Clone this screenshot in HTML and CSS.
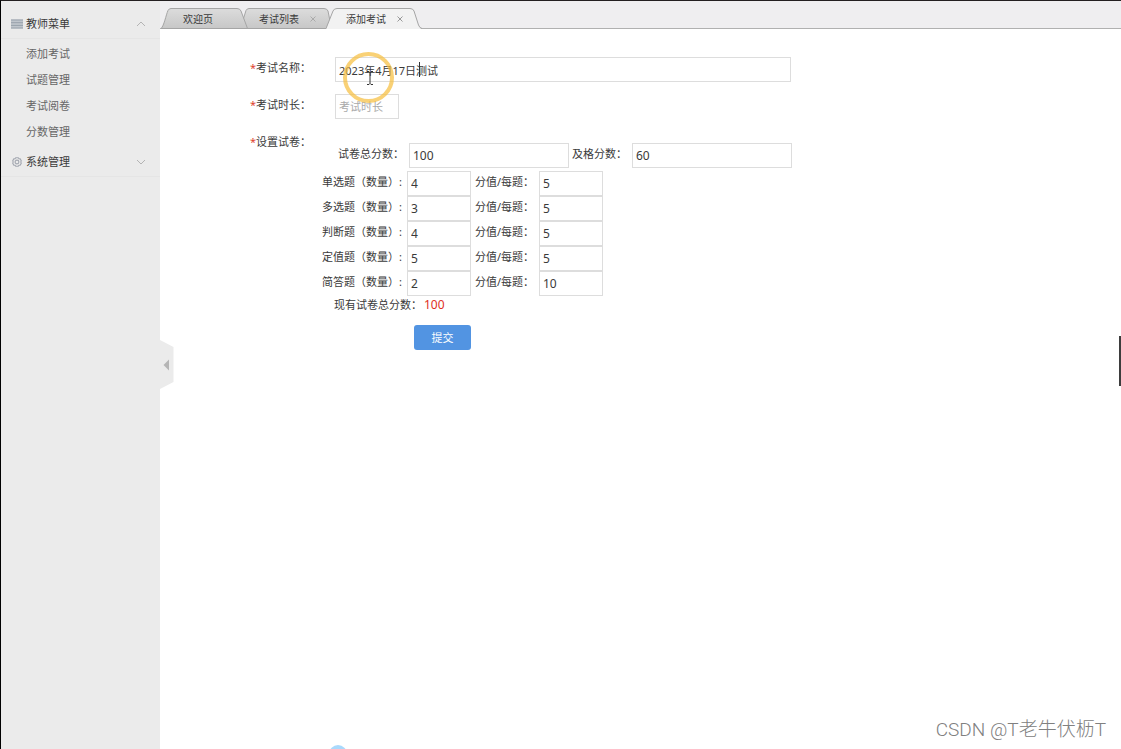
FILE: index.html
```html
<!DOCTYPE html>
<html lang="zh-CN">
<head>
<meta charset="utf-8">
<title>添加考试</title>
<link rel="stylesheet" href="styles.css">
</head>
<body>
<div class="app">
  <nav class="sidebar" aria-label="教师菜单">
    <button class="menu-head" type="button">
      <svg class="menu-icon" width="12" height="12" viewBox="0 0 12 12"><path d="M0 1.5h12v9H0z" fill="#bfc5cc"/><path d="M0 2h12M0 4.7h12M0 7.4h12M0 10h12" stroke="#98a1ab"/></svg>
      <span class="menu-title">教师菜单</span>
      <svg width="10" height="6" viewBox="0 0 10 6" fill="none" stroke="#b4b4b4"><path d="M1 5l4-4 4 4"/></svg>
    </button>
    <ul class="submenu">
      <li><a href="#add">添加考试</a></li>
      <li><a href="#questions">试题管理</a></li>
      <li><a href="#marking">考试阅卷</a></li>
      <li><a href="#scores">分数管理</a></li>
    </ul>
    <button class="menu-head menu-head-small" type="button">
      <svg class="menu-icon" width="12" height="12" viewBox="-1 -1 14 14" fill="none" stroke="#a4a8b1" stroke-width="1.300"><path d="M4.5 1h3l.7 1.2 1.5.1 1.3 2.4-.6 1.3.6 1.3-1.3 2.4-1.5.1L7.500 11h-3l-.7-1.200-1.500-.1L1 7.300 1.600 6 1 4.700l1.300-2.400 1.500-.1z"/><circle cx="6" cy="6" r="2.200"/></svg>
      <span class="menu-title">系统管理</span>
      <svg width="10" height="6" viewBox="0 0 10 6" fill="none" stroke="#b4b4b4"><path d="M1 1l4 4 4-4"/></svg>
    </button>
    <button class="collapse" type="button" aria-label="收起菜单">
      <svg width="14" height="50" viewBox="0 0 14 50"><path d="M0 0l13.500 7v35L0 49z" fill="#ebebeb"/><path d="M9 19.500v11L3.500 25z" fill="#b5b5b5"/></svg>
    </button>
  </nav>
  <div class="content">
    <div class="tabs">
      <div class="tab tab-first">
        <svg class="tab-shape" width="87" height="21" viewBox="0 0 87 21"><defs><linearGradient id="grey" x2="0" y2="1"><stop stop-color="#dcdcdc"/><stop offset="1" stop-color="#c7c7c7"/></linearGradient></defs><path d="M0 20.500C3 18 5 7 7 2.500Q8 .5 10 .5H76Q79 .5 80 3L86.500 20.500z" fill="url(#grey)" stroke="#a5a5a5"/></svg>
        <button class="tab-name" type="button">欢迎页</button>
      </div>
      <div class="tab tab-second">
        <svg class="tab-shape" width="89" height="21" viewBox="0 0 89 21"><path d="M0 20.500V12L3 2.500Q4 .5 6 .5H81Q84 .5 85 3L88.500 20.500z" fill="url(#grey)" stroke="#a5a5a5"/></svg>
        <button class="tab-name" type="button">考试列表</button>
        <button class="tab-close" type="button" aria-label="关闭考试列表"><svg width="6" height="6" viewBox="0 0 6 6" stroke="#aaa"><path d="M.5.5l5 5M5.500.5l-5 5"/></svg></button>
      </div>
      <div class="tab tab-current">
        <svg class="tab-shape" width="96" height="21" viewBox="0 0 96 21"><path d="M0 21L7 3Q8 .5 11 .5H84Q87 .5 88 3L92.500 17Q93.500 20 96 21z" fill="#f2f2f2"/><path d="M0 20.500L7 3Q8 .5 11 .5H84Q87 .5 88 3L92.500 17Q93.500 20 96 20.500" fill="none" stroke="#a5a5a5"/></svg>
        <button class="tab-name" type="button">添加考试</button>
        <button class="tab-close" type="button" aria-label="关闭添加考试"><svg width="6" height="6" viewBox="0 0 6 6" stroke="#999"><path d="M.5.5l5 5M5.500.5l-5 5"/></svg></button>
      </div>
    </div>
    <form class="exam-form">
      <div class="field">
        <label class="field-label" for="name"><span class="required">*</span>考试名称：</label>
        <input class="box box-name" id="name" type="text" value="2023年4月17日测试">
      </div>
      <div class="field">
        <label class="field-label" for="duration"><span class="required">*</span>考试时长：</label>
        <input class="box box-small" id="duration" type="text" placeholder="考试时长">
      </div>
      <fieldset class="paper">
        <legend class="paper-label"><span class="required">*</span>设置试卷：</legend>
        <div class="paper-body">
          <div class="totals">
            <label class="totals-label" for="total">试卷总分数：</label>
            <input class="box box-wide" id="total" type="text" value="100">
            <label class="pass-label" for="pass">及格分数：</label>
            <input class="box box-wide" id="pass" type="text" value="60">
          </div>
          <div class="question">
            <label class="count-label" for="c1">单选题（数量）:</label><input class="box box-small" id="c1" type="text" value="4">
            <label class="point-label" for="p1">分值/每题：</label><input class="box box-small" id="p1" type="text" value="5">
          </div>
          <div class="question">
            <label class="count-label" for="c2">多选题（数量）:</label><input class="box box-small" id="c2" type="text" value="3">
            <label class="point-label" for="p2">分值/每题：</label><input class="box box-small" id="p2" type="text" value="5">
          </div>
          <div class="question">
            <label class="count-label" for="c3">判断题（数量）:</label><input class="box box-small" id="c3" type="text" value="4">
            <label class="point-label" for="p3">分值/每题：</label><input class="box box-small" id="p3" type="text" value="5">
          </div>
          <div class="question">
            <label class="count-label" for="c4">定值题（数量）:</label><input class="box box-small" id="c4" type="text" value="5">
            <label class="point-label" for="p4">分值/每题：</label><input class="box box-small" id="p4" type="text" value="5">
          </div>
          <div class="question">
            <label class="count-label" for="c5">简答题（数量）:</label><input class="box box-small" id="c5" type="text" value="2">
            <label class="point-label" for="p5">分值/每题：</label><input class="box box-small" id="p5" type="text" value="10">
          </div>
          <p class="sum">现有试卷总分数：<output class="sum-value">100</output></p>
          <button class="submit" type="button">提交</button>
        </div>
      </fieldset>
    </form>
  </div>
</div>
<span class="caret"></span>
<span class="pointer-ring"></span>
<svg class="pointer" width="8" height="14" viewBox="0 0 8 14" fill="none" stroke="#333"><path d="M1 .5h2l1 1 1-1h2M4 1.500v11M1 13.500h2l1-1 1 1h2"/></svg>
<span class="scroll-mark"></span>
<span class="dot"></span>
<span class="watermark">CSDN @T老牛伏枥T</span>
</body>
</html>
```
FILE: styles.css
```css
* { box-sizing: border-box; }
body {
  margin: 0;
  position: relative;
  min-height: 100vh;
  overflow: hidden;
  background: #fff;
  color: #3a3a3a;
  font: 11px/24px "Noto Sans", "Noto Sans CJK SC", sans-serif;
}
button, input { font: inherit; color: inherit; }
button { border: 0; padding: 0; background: none; }
.app {
  display: flex;
  min-height: 100vh;
  border-top: 1px solid #231f20;
  border-left: 1px solid #000;
}
.sidebar {
  position: relative;
  flex: 0 0 159px;
  padding-top: 8px;
  background: #ebebeb;
}
.menu-head {
  display: flex;
  align-items: center;
  width: 100%;
  height: 30px;
  padding: 0 14px 0 10px;
  border-bottom: 1px solid #e5e5e5;
}
.menu-icon { margin-right: 3px; }
.menu-title { flex: 1; text-align: left; }
.submenu {
  margin: 0;
  padding: 2px 0 2px 25px;
  list-style: none;
  line-height: 26px;
}
.submenu a { display: block; color: #666; text-decoration: none; }
.collapse {
  position: absolute;
  left: 100%;
  top: 339px;
  height: 50px;
  z-index: 2;
}
.collapse svg { display: block; }
.content { flex: 1; min-width: 0; }
.tabs {
  display: flex;
  height: 28px;
  padding: 7px 0 0 1px;
  border-bottom: 1px solid #b0b0b0;
  background: #efeef0;
  font-size: 10px;
}
.tab {
  position: relative;
  display: flex;
  align-items: center;
  height: 21px;
}
.tab-first { width: 87px; padding-left: 22px; z-index: 1; }
.tab-second { width: 89px; margin-left: -5px; padding-left: 16px; }
.tab-current { width: 96px; margin-left: -6px; padding-left: 20px; z-index: 2; }
.tab-shape { position: absolute; inset: 0; }
.tab-name { position: relative; line-height: 20px; }
.tab-close { position: relative; display: flex; margin-left: 11px; }
.exam-form { padding: 28px 20px 0 90px; }
.field { display: flex; margin-bottom: 12px; }
.field-label { flex: 0 0 85px; line-height: 22px; }
.required { color: #e0442e; }
.box {
  min-width: 0;
  height: 25px;
  padding: 0 3px;
  border: 1px solid #ddd;
  border-radius: 0;
  background: #fff;
  outline: 0;
  font-size: 12px;
}
.box::placeholder { color: #aaa; font-size: 11px; opacity: 1; }
.box-name { width: 456px; font-size: 11px; }
.box-small { width: 64px; }
.box-wide { width: 160px; }
.paper {
  display: flex;
  min-width: 0;
  margin: 0;
  padding: 0;
  border: 0;
}
.paper-label { float: left; width: 72px; padding: 0; line-height: 22px; }
.paper-body { flex: 1; padding-top: 12px; line-height: 22px; }
.totals, .question { display: flex; }
.totals { margin-bottom: 3px; padding-left: 16px; }
.totals-label { width: 71px; }
.pass-label { width: 63px; padding-left: 3px; }
.count-label { width: 85px; }
.point-label { width: 68px; padding-left: 4px; }
.sum { margin: 0; padding-left: 12px; line-height: 18px; }
.sum-value { margin-left: 2px; color: #e0301e; font-size: 12px; }
.submit {
  display: block;
  width: 57px;
  height: 25px;
  margin: 11px 0 0 92px;
  border-radius: 3px;
  background: #5294e2;
  color: #fff;
}
.caret {
  position: absolute;
  left: 419px;
  top: 62px;
  width: 1px;
  height: 15px;
  background: #333;
}
.pointer-ring {
  position: absolute;
  left: 343px;
  top: 52px;
  width: 51px;
  height: 51px;
  border: 4px solid rgba(247, 190, 60, .7);
  border-radius: 50%;
}
.pointer { position: absolute; left: 366px; top: 71px; }
.scroll-mark {
  position: absolute;
  right: 0;
  top: 336px;
  width: 2px;
  height: 50px;
  background: #3d3d3d;
}
.dot {
  position: absolute;
  left: 329px;
  bottom: -14px;
  width: 18px;
  height: 18px;
  border-radius: 50%;
  background: #a9d9fc;
}
.watermark {
  position: absolute;
  right: 15px;
  bottom: 7px;
  color: #808080;
  font: 300 19px/24px Roboto, "Noto Sans CJK SC", sans-serif;
}
```
